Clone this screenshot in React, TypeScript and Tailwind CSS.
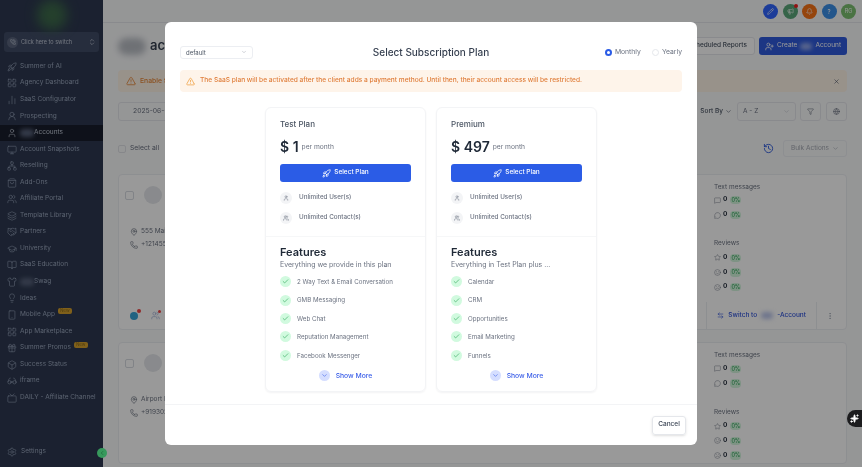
import React from "react";
import {
  Rocket, User, Users, Check, ChevronDown, ChevronsUpDown, TriangleAlert, X, Filter, Sparkles, MapPin, Phone,
  LayoutGrid, Settings, UserRound, Monitor, ShoppingBag, GraduationCap, Lightbulb, Smartphone, Gift, Box, Glasses, Tv,
  Handshake, Shirt, Layers, MoreVertical, ArrowLeftRight, Star, Smile, Frown, MessageSquare, MessageCircle, Megaphone, Bell, Pencil, History, UserPlus, Globe, BarChart2, Network, ChevronLeft, BookOpen, PhoneCall
} from "lucide-react";

const navItems: { label: React.ReactNode; icon: React.ElementType; active?: boolean; badge?: boolean }[] = [
  { label: "Summer of AI", icon: Rocket },
  { label: "Agency Dashboard", icon: LayoutGrid },
  { label: "SaaS Configurator", icon: BarChart2 },
  { label: "Prospecting", icon: UserRound },
  { label: <span className="flex items-center"><span className="h-[8px] w-[14px] rounded-full bg-[#566079] blur-[2px]" /><span>Accounts</span></span>, icon: User, active: true },
  { label: "Account Snapshots", icon: Monitor },
  { label: "Reselling", icon: Network },
  { label: "Add-Ons", icon: ShoppingBag },
  { label: "Affiliate Portal", icon: Users },
  { label: "Template Library", icon: Layers },
  { label: "Partners", icon: Handshake },
  { label: "University", icon: GraduationCap },
  { label: "SaaS Education", icon: BookOpen },
  { label: <span className="flex items-center"><span className="h-[8px] w-[14px] rounded-full bg-[#566079] blur-[2px]" /><span>Swag</span></span>, icon: Shirt },
  { label: "Ideas", icon: Lightbulb },
  { label: "Mobile App", icon: Smartphone, badge: true },
  { label: "App Marketplace", icon: LayoutGrid },
  { label: "Summer Promos", icon: Gift, badge: true },
  { label: "Success Status", icon: Box },
  { label: "iframe", icon: Glasses },
  { label: "DAILY - Affiliate Channel", icon: Tv },
];

function Stat({ icon: Icon }: { icon: React.ElementType }) {
  return (
    <div className="flex h-[14.7px] items-center gap-[2px]">
      <Icon size={7} strokeWidth={1.5} className="text-[#6b7280]" />
      <span className="text-[6.5px] font-bold text-[#1f2937]">0</span>
      <span className="ml-[1px] rounded-sm bg-[#d3f5dd] px-[1px] text-[5.5px] text-[#22a04f]">0%</span>
    </div>
  );
}

function Stats() {
  return (
    <div className="w-[132px] shrink-0 pt-[7px]">
      <div className="text-[6.5px] leading-[10px] text-[#6b7280]">Text messages</div>
      <div className="mt-[1px]">
        <Stat icon={MessageSquare} />
        <Stat icon={MessageCircle} />
      </div>
      <div className="mt-[16px] text-[6.5px] leading-[10px] text-[#6b7280]">Reviews</div>
      <div className="mt-[2px]">
        <Stat icon={Star} />
        <Stat icon={Smile} />
        <Stat icon={Frown} />
      </div>
    </div>
  );
}

function AccountCard({ place, phone, footer }: { place: string; phone: string; footer?: boolean }) {
  return (
    <div className="flex shrink-0 flex-col rounded-[4px] border border-[#eceef2] bg-white">
      <div className="flex justify-between pl-[6px]">
        <div className="pt-[11px]">
          <div className="flex items-center gap-[10px]">
            <span className="h-[9px] w-[9px] rounded-[2px] border border-[#d8dbe1]" />
            <span className="h-[18px] w-[18px] rounded-full bg-[#e5e7eb]" />
          </div>
          <div className="mt-[21px] flex h-[13px] items-center gap-[3px] pl-[5px] text-[6.5px] text-[#6b7280]"><MapPin size={8} />{place}</div>
          <div className="flex h-[13px] items-center gap-[3px] pl-[5px] text-[6.5px] text-[#6b7280]"><Phone size={8} />{phone}</div>
        </div>
        <Stats />
      </div>
      {footer && (
        <div className="mt-[8px] flex h-[27px] items-center justify-between pl-[11px] pr-[12px]">
          <div className="flex items-center gap-[13px]">
            <span className="relative h-[8px] w-[8px] rounded-full bg-[#38a3d8]">
              <span className="absolute -right-[3px] -top-[3px] h-[4px] w-[4px] rounded-full bg-[#ef4444]" />
            </span>
            <span className="relative"><Users size={9} className="text-[#a5b4d8]" /><span className="absolute -right-[1px] -top-[1px] h-[3px] w-[3px] rounded-full bg-[#ef4444]" /></span>
          </div>
          <div className="flex items-center">
            <span className="mr-[10px] text-[6.5px] text-[#6b7280]">Reports</span>
            <span className="flex h-[27px] items-center gap-[4px] border-x border-[#eceef2] px-[10px] text-[6.5px] font-medium text-[#2b4fd8]">
              <ArrowLeftRight size={7} />Switch to<span className="h-[7px] w-[12px] rounded-full bg-[#b9c4ea] blur-[2px]" />-Account
            </span>
            <MoreVertical size={8} className="ml-[9px] text-[#9ca3af]" />
          </div>
        </div>
      )}
    </div>
  );
}

function PlanCard({ name, price, sub, features }: { name: string; price: string; sub: string; features: string[] }) {
  return (
    <div className="flex h-[285px] w-[161px] flex-col rounded-[6px] border border-[#f3f4f6] shadow-[0_1px_2px_rgba(16,24,40,0.05)]">
      <div className="border-b border-[#f6f7f8] px-[14px] pt-[11px]">
        <div className="text-[8px] font-medium leading-[11px] text-[#4b5563]">{name}</div>
        <div className="mt-[6px] flex h-[20px] items-center gap-[3px]">
          <span className="text-[14px] font-semibold text-[#1f2937]">{price}</span>
          <span className="mt-[3px] text-[6.7px] text-[#6b7280]">per month</span>
        </div>
        <button className="mt-[8px] flex h-[18px] w-full items-center justify-center gap-[3px] rounded-[3px] bg-[#2b5ce6] text-[6.5px] font-medium text-white">
          <Rocket size={9} />Select Plan
        </button>
        <div className="mt-[6px] flex h-[20px] items-center gap-[7px] text-[6.3px] font-medium text-[#6b7280]">
          <span className="flex h-[12px] w-[12px] items-center justify-center rounded-full bg-[#f3f4f6]"><User size={6} /></span>Unlimited User(s)
        </div>
        <div className="flex h-[20px] items-center gap-[7px] text-[6.3px] font-medium text-[#6b7280]">
          <span className="flex h-[12px] w-[12px] items-center justify-center rounded-full bg-[#f3f4f6]"><Users size={6} /></span>Unlimited Contact(s)
        </div>
        <div className="h-[8px]" />
      </div>
      <div className="px-[14px] pt-[8px]">
        <div className="text-[11px] font-semibold leading-[14px] text-[#1f2937]">Features</div>
        <div className="text-[7px] leading-[11px] text-[#6b7280]">{sub}</div>
        <div className="mt-[2.5px]">
          {features.map((f) => (
            <div key={f} className="flex h-[18.4px] items-center gap-[6px] text-[6.2px] text-[#6b7280]">
              <span className="flex h-[11px] w-[11px] items-center justify-center rounded-full bg-[#d1fadf]"><Check size={7} strokeWidth={2} className="text-[#22a04f]" /></span>
              {f}
            </div>
          ))}
        </div>
        <div className="mt-[6px] flex items-center justify-center gap-[6px] text-[6.8px] font-medium text-[#3b5fe8]">
          <span className="flex h-[11px] w-[11px] items-center justify-center rounded-full bg-[#d5deff]"><ChevronDown size={7} /></span>Show More
        </div>
      </div>
    </div>
  );
}

export default function App() {
  return (
    <div className="relative flex h-[467px] w-[862px] overflow-hidden bg-[#f9fafb] font-[Inter,sans-serif] blur-[0.55px]">
      <aside className="flex h-full w-[103px] shrink-0 flex-col bg-[#2d3850] text-[#9aa6bd]">
        <div className="flex h-[32px] shrink-0 justify-center">
          <span className="h-[30px] w-[30px] rounded-full bg-[#3d6b4a] blur-[6px]" />
        </div>
        <div className="mx-[4px] flex h-[20px] shrink-0 items-center gap-[3px] rounded-[3px] bg-[#404b66] px-[3px] text-[5.5px] text-[#c2cad8]">
          <span className="flex h-[11px] w-[11px] items-center justify-center rounded-full bg-[#5a657d]"><PhoneCall size={6} /></span>
          <span className="flex-1">Click here to switch</span>
          <ChevronsUpDown size={8} />
        </div>
        <nav className="mt-[6.5px] flex flex-col">
          {navItems.map((item, i) => {
            const Icon = item.icon;
            return (
              <div key={i} className={`flex h-[16.55px] items-center gap-[3px] pl-[7px] text-[6.5px] ${item.active ? "bg-[#181d2c] text-[#c2cad8]" : ""}`}>
                <Icon size={10} strokeWidth={1.4} className="shrink-0" />
                <span className="whitespace-nowrap">{item.label}</span>
                {item.badge && <span className="-mt-[7px] rounded-[2px] bg-[#d6a02c] px-[2px] text-[4.5px] leading-[6px] text-[#8a6a1a]">New</span>}
              </div>
            );
          })}
        </nav>
        <div className="mt-auto mb-[10px] flex h-[10px] items-center gap-[4px] pl-[7px] text-[6.5px]">
          <Settings size={10} strokeWidth={1.4} />Settings
        </div>
      </aside>

      <main className="flex min-w-0 flex-1 flex-col">
        <header className="flex h-[23px] shrink-0 items-center justify-end gap-[4.5px] border-b border-[#e5e7eb] pr-[6px]">
          <span className="flex h-[15px] w-[15px] items-center justify-center rounded-full bg-[#2f65ff] text-white"><Pencil size={7} /></span>
          <span className="relative flex h-[15px] w-[15px] items-center justify-center rounded-full bg-[#5ba77a] text-white"><Megaphone size={7} /><span className="absolute right-0 top-0 h-[4px] w-[4px] rounded-full bg-[#ef2020]" /></span>
          <span className="flex h-[15px] w-[15px] items-center justify-center rounded-full bg-[#f97316] text-white"><Bell size={7} /></span>
          <span className="flex h-[15px] w-[15px] items-center justify-center rounded-full bg-[#3b8fe8] text-[6px] text-white">?</span>
          <span className="flex h-[15px] w-[15px] items-center justify-center rounded-full bg-[#7cc070] text-[5.5px] text-white">RG</span>
        </header>
        <div className="flex min-h-0 flex-1 flex-col px-[15px]">
          <div className="mt-[14px] flex h-[18px] shrink-0 items-center justify-between">
            <div className="flex items-center gap-[4px]">
              <span className="h-[17px] w-[28px] rounded-full bg-[#b9bdc4] blur-[3px]" />
              <span className="text-[13px] font-semibold text-[#374151]">accounts</span>
            </div>
            <div className="flex items-center gap-[4px]">
              <span className="flex h-[18px] items-center rounded-[3px] border border-[#e5e7eb] bg-white px-[7px] text-[6.5px] font-medium text-[#4b5563]">Scheduled Reports</span>
              <span className="flex h-[18px] w-[88px] items-center justify-center gap-[3px] rounded-[3px] bg-[#2f5bdc] text-[6.5px] text-white">
                <UserPlus size={9} />Create<span className="h-[7px] w-[12px] rounded-full bg-[#93a8ea] blur-[2px]" />Account
              </span>
            </div>
          </div>
          <div className="mt-[15px] flex h-[22px] shrink-0 items-center justify-between rounded-[4px] bg-[#fdf3e7] px-[8px]">
            <span className="flex items-center gap-[4px] text-[6.8px] font-medium text-[#e8893a]"><TriangleAlert size={10} />Enable SaaS</span>
            <X size={7} className="mr-[-1px] text-[#4b5563]" />
          </div>
          <div className="mt-[10px] flex h-[19px] shrink-0 items-center justify-between">
            <span className="flex h-[19px] w-[120px] items-center rounded-[3px] border border-[#e5e7eb] pl-[14px] text-[6.8px] text-[#6b7280]">2025-06-01</span>
            <div className="flex items-center">
              <span className="flex items-center gap-[2px] text-[6.5px] font-medium text-[#4b5563]">Sort By<ChevronDown size={7} /></span>
              <span className="ml-[5px] flex h-[19px] w-[59px] items-center justify-between rounded-[3px] border border-[#e5e7eb] px-[5px] text-[6.5px] text-[#6b7280]">A - Z<ChevronDown size={7} className="text-[#c4c7cd]" /></span>
              <span className="ml-[4px] flex h-[19px] w-[21px] items-center justify-center rounded-[3px] border border-[#e5e7eb] text-[#6b7280]"><Filter size={7} /></span>
              <span className="ml-[5px] flex h-[19px] w-[21px] items-center justify-center rounded-[3px] border border-[#e5e7eb] text-[#6b7280]"><Globe size={7} /></span>
            </div>
          </div>
          <div className="mt-[19px] flex h-[17px] shrink-0 items-center justify-between">
            <span className="flex items-center gap-[4px] text-[6.8px] text-[#6b7280]"><span className="h-[8px] w-[8px] rounded-[2px] border border-[#e0e2e6]" />Select all</span>
            <div className="flex items-center gap-[9px]">
              <History size={11} className="text-[#2f5bdc]" />
              <span className="flex h-[17px] w-[64px] items-center justify-center gap-[3px] rounded-[3px] border border-[#eceef2] text-[6.5px] text-[#a4a9b2]">Bulk Actions<ChevronDown size={7} /></span>
            </div>
          </div>
          <div className="mt-[17px] flex flex-col gap-[12px]">
            <AccountCard place="555 Main Street" phone="+12145551234" footer />
            <AccountCard place="Airport Road" phone="+919302211" />
          </div>
        </div>
      </main>

      <div className="absolute inset-0 flex justify-center bg-black/40 pt-[22px]">
        <div className="flex h-[423px] w-[532px] flex-col rounded-[6px] bg-white">
          <div className="flex h-[24px] shrink-0 translate-y-0 items-center justify-between px-[15px] mt-[18px]">
            <span className="flex h-[13px] w-[73px] items-center justify-between rounded-[3px] border border-[#eceef2] px-[5px] text-[6px] text-[#4b5563]">default<ChevronDown size={6} className="text-[#a4a9b2]" /></span>
            <span className="text-[10px] font-medium text-[#374151]">Select Subscription Plan</span>
            <div className="flex w-[73px] items-center justify-end gap-[3px] text-[6.8px] text-[#6b7280]">
              <span className="h-[7px] w-[7px] shrink-0 rounded-full border-2 border-[#2b5ce6] bg-white" />
              <span>Monthly</span>
              <span className="ml-[8px] h-[7px] w-[7px] shrink-0 rounded-full border border-[#e5e7eb]" />
              <span>Yearly</span>
            </div>
          </div>
          <div className="mx-[15px] mt-[6px] flex h-[22px] shrink-0 items-center gap-[5px] rounded-[4px] bg-[#fef4ea] px-[6px] text-[6.6px] font-medium text-[#e07f3c]">
            <TriangleAlert size={9} className="text-[#f0a040]" />
            The SaaS plan will be activated after the client adds a payment method. Until then, their account access will be restricted.
          </div>
          <div className="mt-[15px] flex justify-center gap-[10px] pr-[0px]">
            <PlanCard name="Test Plan" price="$ 1" sub="Everything we provide in this plan" features={["2 Way Text & Email Conversation", "GMB Messaging", "Web Chat", "Reputation Management", "Facebook Messenger"]} />
            <PlanCard name="Premium" price="$ 497" sub="Everything in Test Plan plus ..." features={["Calendar", "CRM", "Opportunities", "Email Marketing", "Funnels"]} />
          </div>
          <div className="mt-[12px] flex flex-1 items-center justify-end border-t border-[#f3f4f6] pr-[11px]">
            <button className="h-[19px] w-[34px] rounded-[3px] border border-[#e5e7eb] text-[6.5px] font-medium text-[#374151] shadow-sm">Cancel</button>
          </div>
        </div>
      </div>

      <span className="absolute left-[97px] top-[448px] flex h-[10px] w-[10px] items-center justify-center rounded-full bg-[#37995c] text-[#14532d]"><ChevronLeft size={6} /></span>
      <span className="absolute left-[847px] top-[410px] flex h-[17px] w-[20px] items-center rounded-l-full bg-[#1c1c1e] pl-[3px] text-white"><Sparkles size={9} fill="white" /></span>
    </div>
  );
}
